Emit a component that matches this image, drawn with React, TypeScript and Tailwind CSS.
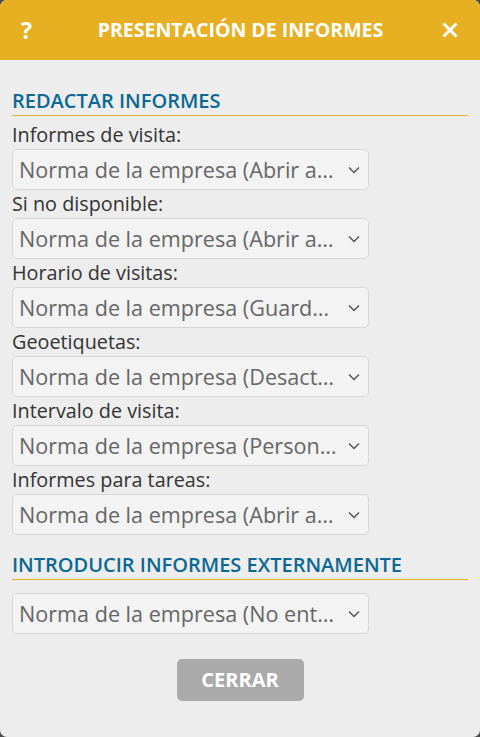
import * as React from "react";

const font = { fontFamily: '"Open Sans", "Noto Sans", sans-serif' };

function Select({ value }: { value: string }) {
  return (
    <div className="flex h-[41px] w-[357px] items-center justify-between rounded-[5px] border border-[#d6d6d6] bg-[#f3f3f3] pl-[6px] pr-[8px]">
      <span className="whitespace-nowrap text-[21.6px] leading-none text-[#666666]">{value}</span>
      <svg width="12" height="8" viewBox="0 0 12 8" fill="none" className="shrink-0">
        <path d="M1 1.5 L6 6.5 L11 1.5" stroke="#555555" strokeWidth="1.5" />
      </svg>
    </div>
  );
}

function Field({ label, value }: { label: string; value: string }) {
  return (
    <div>
      <div className="text-[19.8px] leading-[28px] text-[#333333]">{label}</div>
      <Select value={value} />
    </div>
  );
}

function SectionTitle({ children, first }: { children: React.ReactNode; first?: boolean }) {
  return (
    <div
      className={
        "border-b text-[20px] font-semibold leading-[28px] text-[#0b6894] " +
        (first ? "border-[#e3b03a]" : "border-[#e9ac1c]")
      }
    >
      {children}
    </div>
  );
}

export default function App() {
  return (
    <div className="h-[737px] w-[480px] bg-[#4b4b4b]" style={font}>
      <div className="flex h-full flex-col overflow-hidden rounded-[7px] bg-[#ededed]">
        <header className="flex h-[60px] shrink-0 items-center justify-between bg-[#e6b022] px-[21px] text-white">
          <span className="w-[20px] text-[23px] font-bold leading-none">?</span>
          <span className="text-[19.5px] font-bold leading-none">PRESENTACIÓN DE INFORMES</span>
          <svg width="20" height="20" viewBox="0 0 20 20" className="mr-[-1px]">
            <path d="M3.5 3.5 L16.5 16.5 M16.5 3.5 L3.5 16.5" stroke="#ffffff" strokeWidth="3" />
          </svg>
        </header>

        <main className="flex flex-col px-3 pt-[27px]">
          <SectionTitle first>REDACTAR INFORMES</SectionTitle>
          <div className="mt-[5px]">
            <Field label="Informes de visita:" value="Norma de la empresa (Abrir a…" />
            <Field label="Si no disponible:" value="Norma de la empresa (Abrir a…" />
            <Field label="Horario de visitas:" value="Norma de la empresa (Guard…" />
            <Field label="Geoetiquetas:" value="Norma de la empresa (Desact…" />
            <Field label="Intervalo de visita:" value="Norma de la empresa (Person…" />
            <Field label="Informes para tareas:" value="Norma de la empresa (Abrir a…" />
          </div>

          <div className="mt-[16px]">
            <SectionTitle>INTRODUCIR INFORMES EXTERNAMENTE</SectionTitle>
          </div>
          <div className="mt-[13px]">
            <Select value="Norma de la empresa (No ent…" />
          </div>

          <div className="mt-[25px] flex justify-center">
            <button className="h-[42px] w-[127px] rounded-[5px] bg-[#aaaaaa] text-[20px] font-bold text-white">
              CERRAR
            </button>
          </div>
        </main>
      </div>
    </div>
  );
}
